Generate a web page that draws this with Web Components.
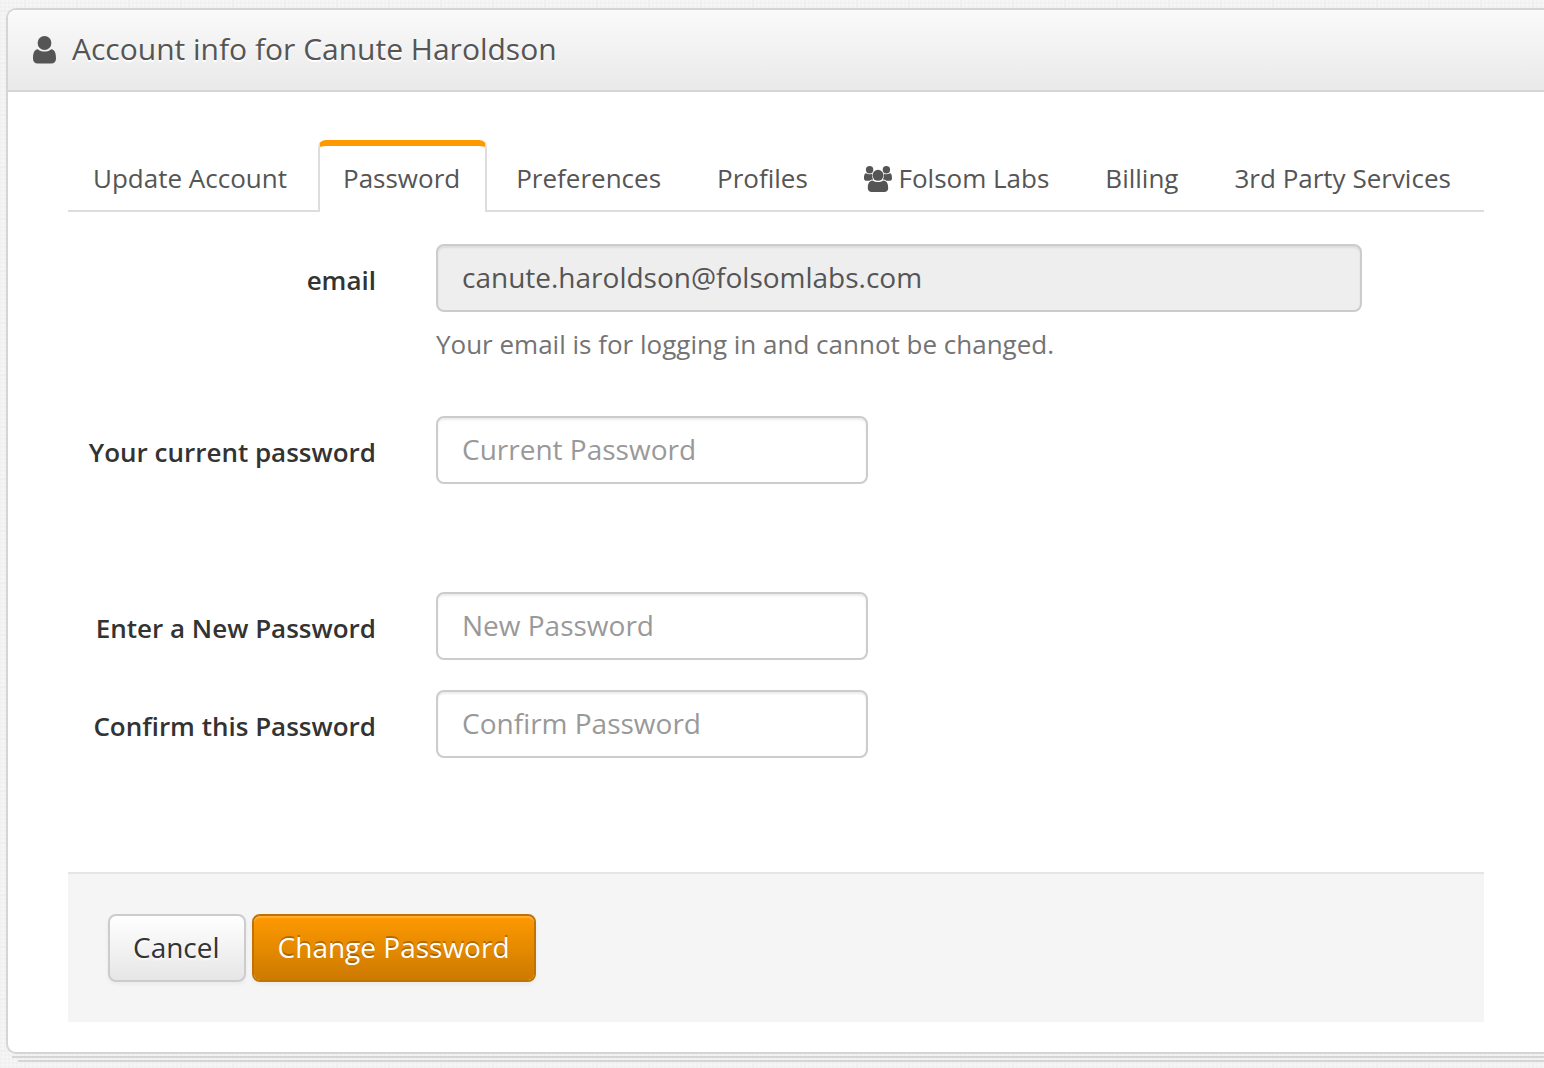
<!DOCTYPE html>
<html lang="en">
<head>
<meta charset="utf-8">
<meta name="viewport" content="width=device-width, initial-scale=1">
<title>Account info</title>
<style>
  body {
    margin: 0;
    padding: 8px 0 6px 6px;
    font: 26px/40px "Open Sans", sans-serif;
    color: #333;
    background-color: #f6f6f6;
    background-image:
      linear-gradient(90deg, #efefef 2px, transparent 2px),
      linear-gradient(#efefef 2px, transparent 2px),
      linear-gradient(90deg, rgba(0,0,0,.01) 2px, transparent 2px),
      linear-gradient(rgba(0,0,0,.01) 2px, transparent 2px);
    background-size: 52px 52px, 52px 52px, 4px 4px, 4px 4px;
    background-position: 24px 10px, 24px 10px, 0 2px, 0 2px;
  }
</style>
</head>
<body>
<account-panel>
  <user-icon slot="icon"></user-icon>
  <span slot="title">Account info for Canute Haroldson</span>
  <tab-bar>
    <tab-item>Update Account</tab-item>
    <tab-item active>Password</tab-item>
    <tab-item>Preferences</tab-item>
    <tab-item>Profiles</tab-item>
    <tab-item><group-icon></group-icon> Folsom Labs</tab-item>
    <tab-item>Billing</tab-item>
    <tab-item>3rd Party Services</tab-item>
  </tab-bar>
  <password-form></password-form>
</account-panel>

<script>
const define = (name, markup, setup) => customElements.define(name, class extends HTMLElement {
  constructor() {
    super();
    this.attachShadow({ mode: "open" }).innerHTML = markup;
  }
  connectedCallback() { if (setup) setup(this, this.shadowRoot); }
});

define("user-icon", `
  <style>:host{display:block;width:24px;height:28px} svg{display:block}</style>
  <svg width="24" height="28" viewBox="0 0 24 28" fill="#555" aria-hidden="true">
    <circle cx="11.5" cy="7" r="6.9"/>
    <path d="M4.700 13.200C6.400 14.600 8.800 15.500 11.500 15.500s5.100-.9 6.800-2.300C22 13.600 23 17.600 23 22.500c0 3.300-1.900 5.100-4.700 5.100H4.700C1.900 27.600 0 25.800 0 22.500c0-4.900 1-8.900 4.700-9.300z"/>
  </svg>`);

define("group-icon", `
  <style>:host{display:inline-block;width:28px;height:26px;vertical-align:-4px} svg{display:block}</style>
  <svg width="28" height="26" viewBox="0 0 28 26" fill="#555" aria-hidden="true">
    <circle cx="5.600" cy="3.700" r="3.700"/><circle cx="22.400" cy="3.700" r="3.700"/>
    <circle cx="14" cy="9.300" r="5.500"/>
    <path d="M2.100 7.200c1.800 1.200 4.200 1.300 6 .5-.1.500-.1 1-.1 1.600 0 1.600.5 3 1.300 4.200-1.500 0-2.800.5-3.700 1.300H2.800C1.100 14.800 0 14.100 0 12.500 0 10.600.1 7.200 2.100 7.200z"/>
    <path d="M25.900 7.200c-1.800 1.200-4.200 1.300-6 .5.1.500.1 1 .1 1.600 0 1.600-.5 3-1.300 4.200 1.500 0 2.800.5 3.700 1.300h2.800c1.700 0 2.800-.7 2.800-2.300 0-1.900-.1-5.300-2.100-5.300z"/>
    <path d="M8.700 14.600C10.200 15.600 12 16.100 14 16.100s3.800-.5 5.300-1.500c3.700 0 4.900 3.700 4.900 7.600 0 2.400-1.600 3.800-3.900 3.800H7.700c-2.300 0-3.900-1.400-3.900-3.800 0-3.900 1.200-7.600 4.900-7.600z"/>
  </svg>`);

define("account-panel", `
  <style>
    :host{display:block}
    section{border:2px solid #d5d5d5;border-right:0;border-radius:10px 0 0 10px;background:#fff;overflow:hidden}
    header{display:flex;align-items:flex-end;gap:15px;height:54px;padding:0 25px 26px;
      border-bottom:2px solid #d5d5d5;background:linear-gradient(#fafafa,#e9e9e9)}
    h1{margin:0;font-size:30px;line-height:30px;font-weight:400;color:#555;text-shadow:0 2px 0 #fff}
    .body{padding:48px 60px 30px}
    .sheet{height:2px;margin-top:2px;background:#d5d5d5}
    .one{margin-left:6px}
    .two{margin-left:12px}
  </style>
  <section>
    <header><slot name="icon"></slot><h1><slot name="title"></slot></h1></header>
    <div class="body"><slot></slot></div>
  </section>
  <div class="sheet one"></div>
  <div class="sheet two"></div>`);

define("tab-bar", `
  <style>
    :host{display:block}
    nav{display:flex;gap:4px;border-bottom:2px solid #ddd}
  </style>
  <nav><slot></slot></nav>`);

define("tab-item", `
  <style>
    :host{display:block;margin:0 0 -2px;white-space:nowrap}
    a{display:block;padding:12px 25px 14px 23px;border:2px solid transparent;border-top-width:6px;border-bottom:0;
      color:#555;text-decoration:none}
    :host([active]) a{border-color:#ff9900 #ddd;border-radius:8px 8px 0 0;background:#fff}
  </style>
  <a href="#"><slot></slot></a>`,
  (host, root) => { if (host.hasAttribute("active")) root.querySelector("a").setAttribute("aria-current", "page"); });

define("form-field", `
  <style>
    :host{display:grid;grid-template-columns:308px minmax(0,1fr);column-gap:60px}
    label{padding-top:16px;text-align:right;font-weight:600}
    input{display:block;box-sizing:border-box;width:432px;max-width:100%;height:68px;margin:0;padding:0 24px 2px;
      border:2px solid #ccc;border-radius:8px;background:#fff;color:#555;
      font:28px/40px "Open Sans",sans-serif;box-shadow:inset 0 2px 2px rgba(0,0,0,.075)}
    input::placeholder{color:#999;opacity:1}
    :host([wide]) input{width:926px}
    input:disabled{background:#eee;color:#555}
    p{margin:12px 0 0;color:#737373}
    p:empty{display:none}
  </style>
  <label for="field"></label>
  <div><input id="field"><p></p></div>`,
  (host, root) => {
    const input = root.querySelector("input");
    root.querySelector("label").textContent = host.getAttribute("label");
    root.querySelector("p").textContent = host.getAttribute("help") || "";
    input.type = host.getAttribute("type") || "text";
    input.placeholder = host.getAttribute("placeholder") || "";
    input.value = host.getAttribute("value") || "";
    input.disabled = host.hasAttribute("disabled");
  });

define("push-button", `
  <style>
    :host{display:block}
    button{display:block;height:68px;margin:0;padding:0 24px 2px 23px;border:2px solid #ccc;border-radius:8px;
      background:linear-gradient(#fff,#e6e6e6);color:#333;font:28px/40px "Open Sans",sans-serif;
      text-shadow:0 2px 2px rgba(255,255,255,.75);
      box-shadow:inset 0 2px 0 rgba(255,255,255,.2),0 2px 4px rgba(0,0,0,.05);cursor:pointer}
    :host([primary]) button{padding-left:24px;border-color:#c07300;background:linear-gradient(#ff9900,#cc7a00);background-clip:padding-box;
      color:#fff;text-shadow:0 -2px 0 rgba(0,0,0,.25)}
  </style>
  <button type="button"><slot></slot></button>`);

define("password-form", `
  <style>
    :host{display:block;padding-top:32px}
    form{display:flex;flex-direction:column}
    .fields{display:flex;flex-direction:column;gap:30px}
    .current{margin-top:22px}
    .new{margin-top:78px}
    footer{display:flex;gap:6px;margin-top:114px;padding:40px;border-top:2px solid #e5e5e5;background:#f5f5f5}
  </style>
  <form>
    <div class="fields">
      <form-field wide disabled label="email" value="canute.haroldson@folsomlabs.com" help="Your email is for logging in and cannot be changed."></form-field>
      <form-field class="current" type="password" label="Your current password" placeholder="Current Password"></form-field>
      <form-field class="new" type="password" label="Enter a New Password" placeholder="New Password"></form-field>
      <form-field type="password" label="Confirm this Password" placeholder="Confirm Password"></form-field>
    </div>
    <footer>
      <push-button>Cancel</push-button>
      <push-button primary>Change Password</push-button>
    </footer>
  </form>`);
</script>
</body>
</html>
